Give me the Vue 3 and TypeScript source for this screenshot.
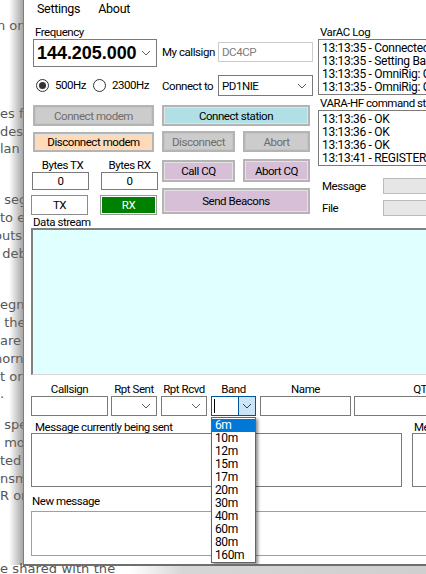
<script setup lang="ts">
// left-hand article text peeking out behind the app window
const articleLines = [
  { text: 'n on', cls: 'at-25 pull-3' },
  { text: 'es f', cls: 'at-113' },
  { text: 'des', cls: '' },
  { text: 'lan', cls: '' },
  { text: ' seg', cls: 'at-201' },
  { text: 'to e', cls: '' },
  { text: 'outsi', cls: 'pull-6' },
  { text: ' deb', cls: 'pull-2' },
  { text: 'egn', cls: 'at-306' },
  { text: ' the', cls: '' },
  { text: 'are', cls: '' },
  { text: 'norn', cls: 'pull-6' },
  { text: 't or', cls: '' },
  { text: '.', cls: '' },
  { text: ' spe', cls: 'at-428' },
  { text: ' mo', cls: '' },
  { text: 'ted', cls: '' },
  { text: 'nsm', cls: '' },
  { text: 'R or', cls: '' },
]

const varacLog = [
  '13:13:35 - Connected to VARA',
  '13:13:35 - Setting Band',
  '13:13:35 - OmniRig: Connected',
  '13:13:35 - OmniRig: Connected',
]
const varaLog = ['13:13:36 - OK', '13:13:36 - OK', '13:13:36 - OK', '13:13:41 - REGISTERED']
const bands = ['6m', '10m', '12m', '15m', '17m', '20m', '30m', '40m', '60m', '80m', '160m']
</script>

<template>
  <div class="desktop">
    <div class="article">
      <div v-for="(line, i) in articleLines" :key="i" class="article-line" :class="line.cls">{{ line.text }}</div>
    </div>
    <div class="article-last">e shared with the</div>
    <div class="under-strip"></div>

    <div class="window">
      <div class="menu">
        <span>Settings</span>
        <span>About</span>
      </div>

      <div class="top">
        <!-- frequency + modem column -->
        <div class="col-left">
          <div class="lbl freq-lbl">Frequency</div>
          <div class="combo freq-combo">
            <span class="freq-value">144.205.000</span>
            <svg class="chev" width="10" height="6" viewBox="0 0 10 6"><path d="M1 1L5 5L9 1" fill="none" stroke="#606060" stroke-width="1" /></svg>
          </div>
          <div class="radios">
            <span class="radio on"><i></i></span>
            <span class="radio-text first">500Hz</span>
            <span class="radio"></span>
            <span class="radio-text">2300Hz</span>
          </div>
          <button class="btn off modem first-modem">Connect modem</button>
          <button class="btn peach modem second-modem">Disconnect modem</button>
          <div class="bytes-row bytes-labels">
            <span>Bytes TX</span>
            <span>Bytes RX</span>
          </div>
          <div class="bytes-row bytes-values">
            <div class="box">0</div>
            <div class="box">0</div>
          </div>
          <div class="bytes-row tx-rx">
            <div class="box tx">TX</div>
            <div class="box rx"><span>RX</span></div>
          </div>
          <div class="lbl stream-lbl">Data stream</div>
        </div>

        <!-- connection column -->
        <div class="col-mid">
          <div class="field-row callsign-row">
            <span class="lbl">My callsign</span>
            <div class="box readonly">DC4CP</div>
          </div>
          <div class="field-row connect-row">
            <span class="lbl">Connect to</span>
            <div class="combo to-combo">
              <span>PD1NIE</span>
              <svg class="chev" width="10" height="6" viewBox="0 0 10 6"><path d="M1 1L5 5L9 1" fill="none" stroke="#606060" stroke-width="1" /></svg>
            </div>
          </div>
          <button class="btn blue wide station">Connect station</button>
          <div class="btn-pair pair-one">
            <button class="btn off left-btn">Disconnect</button>
            <button class="btn off right-btn">Abort</button>
          </div>
          <div class="btn-pair pair-two">
            <button class="btn thistle left-btn">Call CQ</button>
            <button class="btn thistle right-btn">Abort CQ</button>
          </div>
          <button class="btn thistle wide beacons">Send Beacons</button>
        </div>

        <!-- logs column -->
        <div class="col-right">
          <div class="lbl log-lbl">VarAC Log</div>
          <div class="log">
            <div v-for="(row, i) in varacLog" :key="i">{{ row }}</div>
          </div>
          <div class="lbl log-lbl second">VARA-HF command stream</div>
          <div class="log">
            <div v-for="(row, i) in varaLog" :key="i">{{ row }}</div>
          </div>
          <div class="progress-row first">
            <span>Message</span>
            <div class="progress"></div>
          </div>
          <div class="progress-row">
            <span>File</span>
            <div class="progress"></div>
          </div>
        </div>
      </div>

      <div class="stream"></div>

      <div class="qso">
        <div class="qso-col w-call">
          <div class="qso-lbl">Callsign</div>
          <div class="box input"></div>
        </div>
        <div class="qso-col w-rpt">
          <div class="qso-lbl">Rpt Sent</div>
          <div class="combo input">
            <svg class="chev" width="10" height="6" viewBox="0 0 10 6"><path d="M1 1L5 5L9 1" fill="none" stroke="#606060" stroke-width="1" /></svg>
          </div>
        </div>
        <div class="qso-col w-rpt">
          <div class="qso-lbl">Rpt Rcvd</div>
          <div class="combo input">
            <svg class="chev" width="10" height="6" viewBox="0 0 10 6"><path d="M1 1L5 5L9 1" fill="none" stroke="#606060" stroke-width="1" /></svg>
          </div>
        </div>
        <div class="qso-col w-band">
          <div class="qso-lbl">Band</div>
          <div class="band-combo input">
            <span class="caret"></span>
            <span class="band-btn">
              <svg width="10" height="6" viewBox="0 0 10 6"><path d="M1 1L5 5L9 1" fill="none" stroke="#404040" stroke-width="1" /></svg>
            </span>
          </div>
          <div class="band-list">
            <div v-for="(band, i) in bands" :key="band" class="band-item" :class="{ selected: i === 0 }">{{ band }}</div>
          </div>
        </div>
        <div class="qso-col w-name">
          <div class="qso-lbl">Name</div>
          <div class="box input"></div>
        </div>
        <div class="qso-col w-qth">
          <div class="qso-lbl">QTH</div>
          <div class="box input"></div>
        </div>
      </div>

      <div class="messages">
        <div class="msg-main">
          <div class="lbl sent-lbl">Message currently being sent</div>
          <div class="box msg-box"></div>
        </div>
        <div class="msg-side">
          <div class="lbl sent-lbl side-lbl">Message</div>
          <div class="box msg-box"></div>
        </div>
      </div>

      <div class="lbl new-lbl">New message</div>
      <div class="new-box"></div>
    </div>
  </div>
</template>

<style scoped>
.desktop {
  position: relative;
  width: 426px;
  height: 574px;
  overflow: hidden;
  background: #fff;
  font-family: "Roboto", "Noto Sans", sans-serif;
  font-size: 11.5px;
  letter-spacing: -0.45px;
  color: #000;
}

/* page behind the window */
.article {
  position: absolute;
  top: 0;
  left: 0;
  width: 24px;
  height: 565px;
  overflow: hidden;
  font-family: "DejaVu Sans", sans-serif;
  font-size: 13px;
  letter-spacing: 0;
  color: #555;
  white-space: pre;
}

.article-line {
  height: 17.8px;
  line-height: 17.8px;
}

.at-25 { margin-top: 17px; }
.at-113 { margin-top: 70px; }
.at-201 { margin-top: 33px; }
.at-306 { margin-top: 34px; }
.at-428 { margin-top: 13px; }

.pull-2 { margin-left: -2px; }
.pull-3 { margin-left: -3px; }
.pull-6 { margin-left: -6px; }

.article::after {
  content: "";
  position: absolute;
  top: 0;
  right: 0;
  width: 15px;
  height: 100%;
  background: linear-gradient(to right, rgba(110, 110, 110, 0), rgba(110, 110, 110, 0.65));
}

.article-last {
  position: absolute;
  top: 561px;
  left: 0;
  font-family: "DejaVu Sans", sans-serif;
  font-size: 13px;
  color: #555;
  letter-spacing: 0.1px;
}

.under-strip {
  position: absolute;
  left: 130px;
  right: 0;
  top: 566px;
  bottom: 0;
  background: linear-gradient(to right, rgba(205, 205, 205, 0) 0, #d6d6d6 53px, #cfcfcf 100%);
}

/* app window */
.window {
  position: absolute;
  top: 0;
  left: 23px;
  width: 440px;
  height: 566px;
  box-sizing: border-box;
  background: #fff;
  border-left: 1px solid #7d7d7d;
  border-bottom: 2px solid #6e6e6e;
  overflow: hidden;
}

.menu {
  display: flex;
  gap: 18px;
  height: 18px;
  padding: 1px 0 0 13px;
  box-sizing: border-box;
  font-size: 12.5px;
  letter-spacing: -0.3px;
  line-height: 16px;
}

.lbl {
  line-height: 14px;
  white-space: nowrap;
}

.top {
  display: flex;
  height: 210px;
  padding: 7px 0 0 7px;
  box-sizing: border-box;
}

.col-left {
  width: 131px;
  flex: none;
}

.col-mid {
  width: 156px;
  flex: none;
}

.col-right {
  flex: 1;
  min-width: 0;
}

.box,
.combo {
  box-sizing: border-box;
  background: #fff;
  border: 1px solid #7a7a7a;
}

.combo {
  display: flex;
  align-items: center;
  justify-content: space-between;
  padding: 0 5px 0 3px;
}

.chev {
  flex: none;
  margin-left: auto;
}

.freq-lbl {
  margin-left: 4px;
}

.freq-combo {
  width: 124px;
  height: 28px;
  margin: 0 0 0 2px;
}

.freq-value {
  font-family: "Liberation Sans", sans-serif;
  font-weight: 700;
  font-size: 18px;
  letter-spacing: -0.05px;
}

.radios {
  display: flex;
  align-items: center;
  height: 14px;
  margin: 11px 0 0 5px;
}

.radio {
  position: relative;
  width: 13px;
  height: 13px;
  box-sizing: border-box;
  flex: none;
  border: 1px solid #333;
  border-radius: 50%;
  background: #fff;
}

.radio i {
  position: absolute;
  top: 2px;
  left: 2px;
  width: 7px;
  height: 7px;
  border-radius: 50%;
  background: #333;
}

.radio-text {
  margin-left: 6px;
}

.radio-text.first {
  width: 32px;
  margin-right: 6px;
}

/* buttons */
.btn {
  display: block;
  margin: 0;
  padding: 0;
  box-sizing: border-box;
  font: inherit;
  letter-spacing: inherit;
  color: #000;
  border: 2px solid #b4b4b4;
  box-shadow: inset 0 0 0 1px #e2e2e2;
  text-align: center;
  white-space: nowrap;
}

.btn.off {
  background: #ccc;
  color: #6d6d6d;
  box-shadow: inset 0 0 0 1px #c4c4c4;
}

.btn.peach { background: #ffdab9; }
.btn.blue { background: #b0e0e6; }
.btn.thistle { background: #d8bfd8; }

.modem {
  width: 121px;
  margin-left: 2px;
}

.first-modem {
  height: 21px;
  margin-top: 13px;
}

.second-modem {
  height: 20px;
  margin-top: 6px;
}

.bytes-row {
  display: flex;
}

.bytes-labels {
  margin: 6px 0 0 9px;
  height: 14px;
  line-height: 14px;
  gap: 22px;
}

.bytes-labels span {
  width: 45px;
  text-align: center;
  white-space: nowrap;
}

.bytes-values {
  margin: 0 0 0 1px;
  gap: 12px;
}

.bytes-values .box {
  width: 57px;
  height: 18px;
  line-height: 16px;
  text-align: center;
}

.tx-rx {
  margin-top: 5px;
  gap: 12px;
}

.tx-rx .box {
  width: 57px;
  height: 20px;
  line-height: 18px;
  text-align: center;
}

.box.tx {
  border-color: #8c8c8c;
}

.box.rx {
  padding: 1px;
  border-color: #9a9a9a;
  color: #fff;
}

.box.rx span {
  display: block;
  height: 16px;
  line-height: 16px;
  background: #008000;
}

.stream-lbl {
  margin: 0 0 0 2px;
  height: 13px;
  overflow: hidden;
}

.field-row {
  display: flex;
  align-items: center;
}

.field-row .lbl {
  width: 56px;
  flex: none;
}

.callsign-row {
  margin-top: 17px;
}

.readonly {
  width: 95px;
  height: 20px;
  line-height: 18px;
  padding-left: 3px;
  border-color: #ccc;
  color: #7d7d7d;
}

.connect-row {
  margin-top: 13px;
}

.to-combo {
  width: 95px;
  height: 21px;
}

.wide {
  width: 148px;
}

.station {
  height: 21px;
  margin-top: 9px;
}

.btn-pair {
  display: flex;
  gap: 8px;
}

.left-btn {
  width: 73px;
}

.right-btn {
  width: 67px;
}

.pair-one {
  margin-top: 5px;
}

.pair-one .btn {
  height: 21px;
}

.pair-two {
  margin-top: 8px;
}

.pair-two .btn {
  height: 22px;
}

.pair-two .right-btn {
  height: 23px;
  margin-top: -1px;
}

.beacons {
  height: 26px;
  margin-top: 6px;
}

.log-lbl {
  margin-left: 2px;
}

.log-lbl.second {
  margin-top: 1px;
}

.log {
  height: 56px;
  box-sizing: border-box;
  padding: 2px 0 0 3px;
  border: 1px solid #7a7a7a;
  border-right: none;
  white-space: nowrap;
  overflow: hidden;
  line-height: 13px;
  font-size: 12px;
  letter-spacing: -0.3px;
}

.progress-row {
  display: flex;
  align-items: center;
  height: 16px;
  margin-top: 6px;
  padding-left: 4px;
}

.progress-row.first {
  margin-top: 12px;
}

.progress-row span {
  width: 61px;
  flex: none;
}

.progress {
  flex: 1;
  height: 16px;
  box-sizing: border-box;
  background: #e6e6e6;
  border: 1px solid #bcbcbc;
}

/* data stream panel */
.stream {
  height: 147px;
  margin-left: 7px;
  box-sizing: border-box;
  background: #e0ffff;
  border: 2px solid #808080;
  border-right: none;
  border-bottom-color: #d8d8d8;
  border-bottom-width: 1px;
}

/* qso fields */
.qso {
  display: flex;
  margin: 6px 0 0 7px;
}

.qso-col {
  position: relative;
  flex: none;
}

.qso-lbl {
  height: 15px;
  line-height: 16px;
  text-align: center;
  white-space: nowrap;
}

.w-call { width: 77px; margin-right: 3px; }
.w-rpt { width: 46px; margin-right: 4px; }
.w-band { width: 45px; margin-right: 4px; }
.w-name { width: 91px; margin-right: 3px; }
.w-qth { width: 140px; }

.input {
  height: 20px;
}

.band-combo {
  display: flex;
  box-sizing: border-box;
  border: 1px solid #005499;
  background: #fff;
}

.caret {
  flex: 1;
  position: relative;
}

.caret::after {
  content: "";
  position: absolute;
  top: 2px;
  left: 2px;
  width: 1px;
  height: 14px;
  background: #000;
}

.band-btn {
  display: flex;
  align-items: center;
  justify-content: center;
  width: 16px;
  background: #cce4f7;
  border-left: 1px solid #005499;
}

.band-list {
  position: absolute;
  top: 36px;
  left: 0;
  z-index: 2;
  width: 45px;
  box-sizing: border-box;
  padding-top: 1px;
  background: #fff;
  border: 1px solid #646464;
  box-shadow: 2px 2px 3px rgba(0, 0, 0, 0.45);
}

.band-item {
  height: 13px;
  line-height: 13px;
  padding-left: 3px;
  font-size: 12px;
  letter-spacing: -0.4px;
}

.band-item.selected {
  background: #0078d7;
  color: #fff;
}

/* message boxes */
.messages {
  display: flex;
  margin: 3px 0 0 7px;
  gap: 10px;
}

.msg-main {
  width: 371px;
  flex: none;
}

.msg-side {
  flex: 1;
}

.sent-lbl {
  height: 14px;
  line-height: 16px;
  margin-left: 4px;
}

.side-lbl {
  margin-left: 2px;
}

.msg-box {
  height: 54px;
}

.new-lbl {
  margin: 6px 0 0 8px;
  height: 18px;
  line-height: 16px;
}

.new-box {
  height: 45px;
  margin-left: 7px;
  box-sizing: border-box;
  border: 1px solid #a0a0a0;
  border-right: none;
}
</style>

<style>
html,
body {
  margin: 0;
  padding: 0;
}
</style>
